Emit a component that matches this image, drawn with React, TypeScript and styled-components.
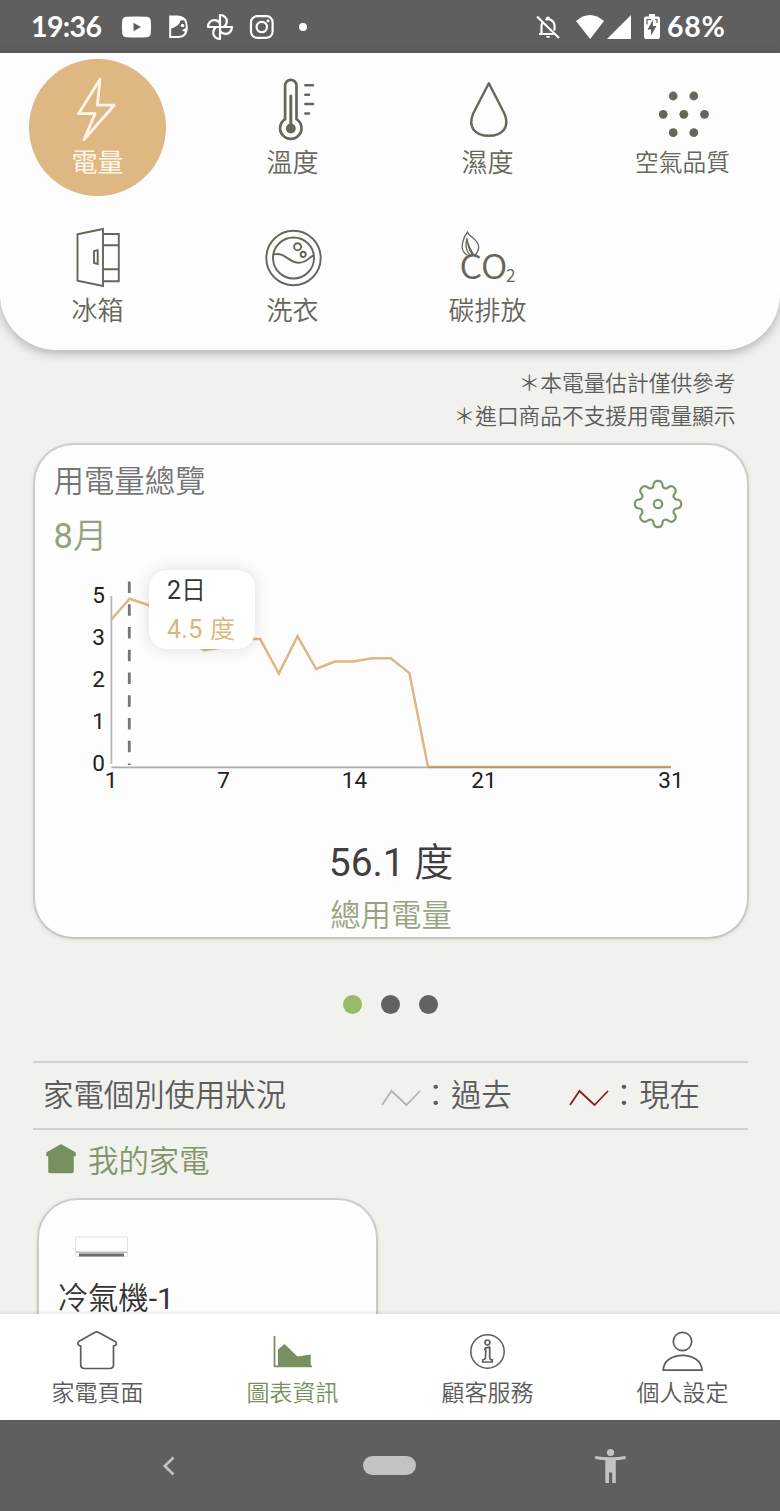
import React from "react";
import styled, { createGlobalStyle } from "styled-components";

const GlobalStyle = createGlobalStyle`
  * { box-sizing: border-box; }
  body { margin: 0; background: #f1f2ee; }
  svg { display: block; flex: none; overflow: visible; }
`;

const olive = "#66675a";
const green = "#788f60";
const slate = "#5c5c5c";
const amber = "#dfb783";

const Screen = styled.div`
  width: 780px;
  height: 1511px;
  display: flex;
  flex-direction: column;
  overflow: hidden;
  background: #f1f2ee;
  font-family: Roboto, "Noto Sans CJK TC", sans-serif;
  font-weight: 350;
`;

const Digits = styled.span`
  font-weight: 400;
`;

/* ---------- status bar ---------- */

const StatusBar = styled.header`
  flex: none;
  height: 53px;
  padding: 0 54px 0 31px;
  display: flex;
  justify-content: space-between;
  align-items: center;
  background: #5f5f5f;
  color: #fff;
`;

const StatusGroup = styled.div<{ $gap?: number }>`
  display: flex;
  align-items: center;
  gap: ${(p) => p.$gap ?? 0}px;
  height: 53px;
`;

const StatusText = styled.span<{ $width: number; $spacing: number }>`
  width: ${(p) => p.$width}px;
  letter-spacing: ${(p) => p.$spacing}px;
  font: 700 28.5px/53px Lato, sans-serif;
  white-space: nowrap;
`;

const Spacer = styled.span<{ $width: number }>`
  width: ${(p) => p.$width}px;
`;

const MoreDot = styled.span`
  width: 8px;
  height: 8px;
  margin-left: 6px;
  border-radius: 50%;
  background: #fff;
`;

/* ---------- category panel ---------- */

const CategoryPanel = styled.nav`
  flex: none;
  height: 296.5px;
  padding-top: 6px;
  display: grid;
  grid-template-columns: repeat(4, 195px);
  grid-auto-rows: 136px;
  row-gap: 12px;
  justify-items: center;
  background: #fdfdfd;
  border-radius: 0 0 56px 56px;
  box-shadow: 0 3px 11px rgba(0, 0, 0, 0.28);
`;

const Category = styled.button<{ $active?: boolean }>`
  width: 136.5px;
  height: 136.5px;
  padding: 18px 0 0;
  border: 0;
  border-radius: 50%;
  display: flex;
  flex-direction: column;
  align-items: center;
  background: ${(p) => (p.$active ? amber : "transparent")};
  color: ${(p) => (p.$active ? "#fff6ea" : olive)};
`;

const CategoryLabel = styled.span<{ $size?: number; $active?: boolean }>`
  margin-top: 6px;
  font: ${(p) => (p.$active ? 400 : 350)} ${(p) => p.$size ?? 26}px/32px Roboto, "Noto Sans CJK TC", sans-serif;
  white-space: nowrap;
`;

/* ---------- content ---------- */

const Content = styled.main`
  flex: 1;
  min-height: 0;
  overflow: hidden;
  display: flex;
  flex-direction: column;
`;

const Notes = styled.div`
  margin: 18.8px 44.5px 11.7px 0;
  text-align: right;
  font-size: 21.7px;
  line-height: 32.5px;
  color: #5c5c5c;
`;

const cardEdge = "0 0 0 2px rgba(0,0,0,.1), 0 1px 5px 1px rgba(0,0,0,.13)";

const OverviewCard = styled.section`
  flex: none;
  width: 712px;
  height: 492px;
  margin: 0 0 0.5px 35px;
  padding-top: 17px;
  border-radius: 38px;
  background: #fdfdfd;
  box-shadow: ${cardEdge};
`;

const CardHeader = styled.div`
  display: flex;
  justify-content: space-between;
  padding: 0 63.5px 0 18.5px;
  height: 97px;
`;

const CardTitle = styled.h2`
  margin: 0;
  font-size: 30.4px;
  line-height: 40px;
  font-weight: 350;
  color: #757575;
`;

const Month = styled.div`
  margin-top: 11px;
  font-size: 34.5px;
  line-height: 46px;
  color: #93a37d;
`;

const SettingsButton = styled.button`
  width: 52px;
  height: 52px;
  margin-top: 16px;
  padding: 0;
  border: 0;
  background: none;
  color: #81966c;
`;

const ChartArea = styled.div`
  position: relative;
  height: 280px;
`;

const Tooltip = styled.div`
  position: absolute;
  left: 113.5px;
  top: 11px;
  width: 106.5px;
  height: 79px;
  padding: 1px 0 0 18.5px;
  border-radius: 18px;
  background: #fff;
  box-shadow: 0 0 16px rgba(0, 0, 0, 0.13);
  font-size: 25px;
  line-height: 39px;
  color: #333336;
`;

const TooltipValue = styled.div`
  color: #dcb47c;
  word-spacing: 1px;
  letter-spacing: 0.3px;
`;

const Total = styled.div`
  text-align: center;
  font-size: 39px;
  line-height: 48px;
  color: #3f3f43;
`;

const TotalCaption = styled.div`
  margin-top: 9px;
  text-align: center;
  font-size: 30.4px;
  line-height: 40px;
  color: #97a482;
`;

const Pager = styled.div`
  flex: none;
  display: flex;
  justify-content: center;
  gap: 18.4px;
  margin: 57.2px 0 47px;
  padding-left: 1px;
`;

const PagerDot = styled.span<{ $active?: boolean }>`
  width: 19.6px;
  height: 19.6px;
  border-radius: 50%;
  background: ${(p) => (p.$active ? "#98bb6a" : "#626262")};
`;

const UsageBar = styled.div`
  flex: none;
  height: 69px;
  margin: 0 32px 0 33px;
  padding-left: 10px;
  display: flex;
  align-items: center;
  border: solid #d2d3d0;
  border-width: 2px 0;
  font-size: 30.4px;
  line-height: 40px;
  color: #5c5c5c;
`;

const UsageTitle = styled.span`
  flex: none;
  width: 338px;
`;

const Legend = styled.span`
  flex: none;
  width: 188.3px;
  display: flex;
  align-items: center;
  white-space: nowrap;
`;

const SectionTitle = styled.div`
  flex: none;
  display: flex;
  align-items: center;
  gap: 12px;
  height: 40px;
  margin: 12px 0 18px 46px;
  font-size: 30.4px;
  line-height: 40px;
  color: #82966d;
`;

const HouseMark = styled.svg`
  margin-bottom: 6px;
`;

const ApplianceCard = styled.section`
  flex: none;
  width: 337.5px;
  height: 200px;
  margin-left: 38.5px;
  padding: 36px 0 0 19px;
  border-radius: 38px;
  background: #fdfdfd;
  box-shadow: ${cardEdge};
  color: #333;
  font-size: 30.4px;
`;

const AirConditioner = styled.svg`
  margin-left: 17.5px;
`;

const ApplianceName = styled.div`
  margin-top: 19px;
  line-height: 40px;
`;

/* ---------- bottom bars ---------- */

const TabBar = styled.nav`
  flex: none;
  height: 106px;
  position: relative;
  display: grid;
  grid-template-columns: repeat(4, 195px);
  background: #fff;
  box-shadow: 0 -1px 4px rgba(0, 0, 0, 0.1);
`;

const Tab = styled.button<{ $active?: boolean }>`
  padding: 14px 0 0;
  border: 0;
  background: none;
  display: flex;
  flex-direction: column;
  align-items: center;
  gap: 6px;
  font: 350 23px/32px Roboto, "Noto Sans CJK TC", sans-serif;
  color: ${(p) => (p.$active ? green : slate)};
`;

const SystemBar = styled.footer`
  flex: none;
  height: 91px;
  padding: 0 154px 0 153px;
  display: flex;
  align-items: center;
  justify-content: space-between;
  background: #5f5f5f;
  color: #c3c3c3;
`;

const HomePill = styled.span`
  width: 53px;
  height: 19px;
  border-radius: 10px;
  background: #c3c3c3;
`;

/* ---------- icons ---------- */

const TileIcon = ({ children, stroke = 2.3 }: { children: React.ReactNode; stroke?: number }) => (
  <svg width="80" height="64" viewBox="-40 -32 80 64" fill="none" stroke="currentColor"
    strokeWidth={stroke} strokeLinejoin="round" strokeLinecap="round">{children}</svg>
);

const BoltIcon = () => (
  <TileIcon stroke={2.8}>
    <path d="M2-29.800-19.500 4.700H-2.900L-14 30.500 16.200-3.800H-.6Z" />
  </TileIcon>
);

const ThermometerIcon = () => (
  <TileIcon stroke={2.7}>
    <path d="M-7.900 10.200V-23.500a5.700 5.700 0 0 1 11.400 0V10.200A10.700 10.700 0 1 1-7.900 10.200Z" />
    <path d="M-2.200-13V18" strokeWidth="3" />
    <circle cx="-2.200" cy="19.500" r="4.900" fill="currentColor" stroke="none" />
    <path d="M12.300-23.700H20M12.300-14.300H16M12.300-5H20M12.300 4.600H16" strokeWidth="2.500" />
  </TileIcon>
);

const DropIcon = () => (
  <TileIcon stroke={2.4}>
    <path d="M.8-25.700-14.800 4.500C-20.500 18-13 26.800.8 26.800S22.100 18 16.400 4.500Z" />
  </TileIcon>
);

const AirIcon = () => (
  <TileIcon>
    <g fill="currentColor" stroke="none">
      {[[-9.8, -13], [10.8, -13], [-19.8, 5.3], [0.8, 5.3], [21.5, 5.3], [-9.8, 23.7], [10.8, 23.7]].map(
        ([x, y]) => <circle key={`${x},${y}`} cx={x} cy={y} r="4.4" />
      )}
    </g>
  </TileIcon>
);

const FridgeIcon = () => (
  <TileIcon stroke={1.9}>
    <path d="M-20.500-22.800 5-28V29L-20.500 23.700Z" strokeLinejoin="miter" />
    <path d="M5-23H20.800V24.300H5M5-11.800H20.800M5 12.300H20.800M-4-5.800-.300-6.800V7L-4 6Z" strokeLinejoin="miter" />
  </TileIcon>
);

const WasherIcon = () => (
  <TileIcon stroke={1.9}>
    <circle cx=".5" cy="1" r="27.200" />
    <circle cx=".5" cy="1" r="20.500" />
    <path d="M-19.500-2.600C-7-5-5 5.800 6 5.800 13.500 5.800 15.500.500 20.500-1.500" />
    <circle cx="4.600" cy="-10.300" r="3.500" />
    <circle cx="10.200" cy="-2.600" r="2.600" />
  </TileIcon>
);

const CarbonIcon = () => (
  <TileIcon stroke={1.3}>
    <path d="M-20.500-25C-25-19-27.500-10-24.500-5.500-23.500-3.500-22-2.500-21-2M-20.500-25C-19-20-9.500-18-9.300-10-9.300-7-10.500-4.500-12.500-2.500M-21-18.500C-23-12-21.500-6-18.500-2.500M-21-18.500C-20.500-12-17-7-14.500-2.500M-21-18.500C-20.500-13-19-7-16-3" />
    <g fill="currentColor" stroke="none" fontFamily="'Noto Sans CJK TC', sans-serif" fontWeight="350">
      <text x="-28.500" y="21.500" fontSize="34" textLength="48" lengthAdjust="spacingAndGlyphs">CO</text>
      <text x="17.800" y="24.600" fontSize="18">2</text>
    </g>
  </TileIcon>
);

const gearPath = (() => {
  const r = 19.7;
  const half = 13.1;
  const at = (deg: number) => {
    const a = (deg * Math.PI) / 180;
    return `${(r * Math.cos(a)).toFixed(2)} ${(r * Math.sin(a)).toFixed(2)}`;
  };
  let d = `M${at(-half)}`;
  for (let i = 0; i < 8; i++) {
    d += `A4.500 4.500 0 0 1 ${at(i * 45 + half)}A3.400 3.400 0 0 0 ${at((i + 1) * 45 - half)}`;
  }
  return d + "Z";
})();

const GearIcon = () => (
  <svg width="52" height="52" viewBox="-26 -26 52 52" fill="none" stroke="currentColor" strokeWidth="2.200">
    <path d={gearPath} />
    <circle r="4.200" />
  </svg>
);

const TrendMark = ({ color }: { color: string }) => (
  <svg width="39.500" height="18" viewBox="0 0 39.500 18" fill="none" stroke={color} strokeWidth="1.800">
    <path d="M1 18 10.500 4 25.500 18 39 4" />
  </svg>
);

const TabIcon = ({ children }: { children: React.ReactNode }) => (
  <svg width="44" height="44" viewBox="-21.5 -22 44 44" fill="none" stroke="currentColor" strokeWidth="1.700"
    strokeLinejoin="round">{children}</svg>
);

/* ---------- chart ---------- */

const daily = [3.93, 4.5, 4.33, 3.9, 3.4, 3.12, 3.2, 3.42, 3.42, 2.5, 3.5, 2.62, 2.82, 2.82, 2.91, 2.91, 2.51,
  ...Array(14).fill(0)];
const dayX = (day: number) => 76 + (day - 1) * 18.65;
const valueY = (v: number) => 208 - v * 37.4;

const UsageChart = () => (
  <svg width="712" height="241" viewBox="0 0 712 241" fill="none" fontFamily="Roboto, sans-serif" fontSize="22.500"
    fontWeight="400">
    <path d="M76.400 37V205" stroke="#b5b5b5" strokeWidth="1.700" />
    <path d="M76.400 208.300H636" stroke="#adadad" strokeWidth="1.800" />
    <path d="M94.300 22.500V206" stroke="#757575" strokeWidth="2.800" strokeDasharray="11.500 11.250" />
    <polyline points={daily.map((v, i) => `${dayX(i + 1)},${valueY(v)}`).join(" ")} stroke="#ddb784" strokeWidth="2.500" />
    <path d={`M${dayX(18)} 208.300H636`} stroke="#bb955e" strokeWidth="1.500" />
    <g fill="#202020" textAnchor="end">
      {[5, 3, 2, 1, 0].map((v, i) => <text key={v} x="70" y={44 + i * 42.1}>{v}</text>)}
    </g>
    <g fill="#202020" textAnchor="middle">
      {[[1, 76], [7, 188.5], [14, 319.5], [21, 449], [31, 636]].map(([d, x]) => (
        <text key={d} x={x} y="229">{d}</text>
      ))}
    </g>
  </svg>
);

const categories = [
  { label: "電量", icon: <BoltIcon />, active: true },
  { label: "溫度", icon: <ThermometerIcon /> },
  { label: "濕度", icon: <DropIcon /> },
  { label: "空氣品質", icon: <AirIcon />, size: 23.7 },
  { label: "冰箱", icon: <FridgeIcon /> },
  { label: "洗衣", icon: <WasherIcon /> },
  { label: "碳排放", icon: <CarbonIcon /> },
];

const tabs = [
  {
    label: "家電頁面",
    icon: <path d="M-2.800-17.500Q-.800-18.800 1.200-17.500L18-8.200Q20.200-5.500 17.200-4.300L16-4.200V14.500Q16 18.500 12 18.500H-12.800Q-16.800 18.500-16.800 14.500V-4.200L-18-4.400Q-21-5.700-18.800-8.500Z" />,
  },
  {
    label: "圖表資訊",
    active: true,
    icon: (
      <>
        <path d="M-18-14V16.300H19.500" strokeWidth="1.800" />
        <path d="M-14.500-.500-8-6 5 6.500 18.200 4.500V16H-14.500Z" fill="currentColor" stroke="none" />
      </>
    ),
  },
  {
    label: "顧客服務",
    icon: (
      <>
        <circle cx="0" cy="1.500" r="16.700" strokeWidth="1.500" />
        <circle cx="0" cy="-7.500" r="2.500" />
        <path d="M-2-2.200Q0-2.200 2.200-3V8Q2.200 9.700 5 9.800L4.700 12H-5L-4.700 9.800Q-2.300 9.600-2.100 8L-1.600 0-2.600-.300Z" />
      </>
    ),
  },
  {
    label: "個人設定",
    icon: (
      <>
        <circle cx="0" cy="-8.500" r="9.200" />
        <path d="M-19.300 20.200C-18.800.3 18.800.3 19.500 20.200Z" />
      </>
    ),
  },
];

export default function App() {
  return (
    <Screen>
      <GlobalStyle />
      <StatusBar>
        <StatusGroup $gap={18}>
          <StatusText $width={73} $spacing={-0.6}>19:36</StatusText>
          <svg width="29" height="22" viewBox="0 0 29 22">
            <path fill="#fff" fillRule="evenodd" d="M4 .8Q14.500 0 25 .8 28.500 1.200 28.800 5 29.300 11 28.800 17 28.500 20.800 25 21.200 14.500 22 4 21.200.500 20.800.200 17-.300 11 .200 5 .500 1.200 4 .8ZM11.500 6.700V15.300L19 11Z" />
          </svg>
          <svg width="20" height="24" viewBox="0 0 20 24">
            <path d="M1.200 1.500H9Q17.800 2 17.800 12T9 22H1.200Z" fill="none" stroke="#fff" strokeWidth="2" />
            <path d="M1 1H9Q14 1.500 16.500 5L11.500 5.500Q10.500 11 2.500 13.500H1Z" fill="#fff" />
            <circle cx="13.500" cy="10.500" r="1.800" fill="#fff" />
            <path d="M18 12.500 13 15Q14.500 17.500 17.500 16.500Z" fill="#fff" />
          </svg>
          <svg width="26" height="26" viewBox="-13 -13 26 26" fill="none" stroke="#fff" strokeWidth="2.200" strokeLinejoin="round">
            {[0, 90, 180, 270].map((a) => (
              <path key={a} transform={`rotate(${a})`} d="M0 0V-12C4.500-12 6.800-8.800 6.800-5.800 6.800-3 5.500-1.200 3.800 0" />
            ))}
          </svg>
          <svg width="24" height="24" viewBox="1.5 0 24 24" fill="none" stroke="#fff" strokeWidth="2.200">
            <rect x="1.500" y="1.200" width="21.600" height="21.600" rx="6" />
            <circle cx="12.300" cy="12" r="5.200" />
            <circle cx="18.500" cy="5.800" r="1.500" fill="#fff" stroke="none" />
          </svg>
          <MoreDot />
        </StatusGroup>
        <StatusGroup>
          <svg width="24" height="24" viewBox="0 0 24 24" fill="none" stroke="#fff" strokeWidth="2.200">
            <path d="M3 19H18M5.500 19V11Q5.500 8.500 7 6.700M9.500 4.800Q12 3.500 15 5 18.500 7 18.500 11V15.500M1 1.500 23 23" />
            <path d="M10 3.500a2 2 0 0 1 4 0zM10 21h4a2 2 0 0 1-4 0z" fill="#fff" stroke="none" />
          </svg>
          <Spacer $width={16} />
          <svg width="28" height="24" viewBox="0 0 28 24"><path fill="#fff" d="M0 6Q14-6 28 6L14.200 24Z" /></svg>
          <Spacer $width={3} />
          <svg width="24" height="24" viewBox="0 0 24 24"><path fill="#fff" d="M24 0V24H0Z" /></svg>
          <Spacer $width={13} />
          <svg width="16" height="25" viewBox="0 0 16 25">
            <path fill="#fff" d="M5 0h6v2.500h3q2 0 2 2V23q0 2-2 2H2q-2 0-2-2V4.500q0-2 2-2h3z" />
            <path fill="#5f5f5f" d="M9 6 3.500 15.500H7V21.500L12.500 12H9Z" />
            <path stroke="#5f5f5f" strokeWidth="1.200" fill="none" d="M3 10.500V5.500H7M13 9V5.500H11" />
          </svg>
          <Spacer $width={7} />
          <StatusText $width={59} $spacing={0.7}>68%</StatusText>
        </StatusGroup>
      </StatusBar>

      <CategoryPanel>
        {categories.map((c) => (
          <Category key={c.label} $active={c.active}>
            {c.icon}
            <CategoryLabel $size={c.size} $active={c.active}>{c.label}</CategoryLabel>
          </Category>
        ))}
      </CategoryPanel>

      <Content>
        <Notes>
          <div>＊本電量估計僅供參考</div>
          <div>＊進口商品不支援用電量顯示</div>
        </Notes>

        <OverviewCard>
          <CardHeader>
            <div>
              <CardTitle>用電量總覽</CardTitle>
              <Month><Digits>8</Digits>月</Month>
            </div>
            <SettingsButton><GearIcon /></SettingsButton>
          </CardHeader>
          <ChartArea>
            <UsageChart />
            <Tooltip>
              <div><Digits>2</Digits>日</div>
              <TooltipValue><Digits>4.5</Digits> 度</TooltipValue>
            </Tooltip>
          </ChartArea>
          <Total><Digits>56.1</Digits> 度</Total>
          <TotalCaption>總用電量</TotalCaption>
        </OverviewCard>

        <Pager>
          <PagerDot $active />
          <PagerDot />
          <PagerDot />
        </Pager>

        <UsageBar>
          <UsageTitle>家電個別使用狀況</UsageTitle>
          <Legend><TrendMark color="#b3b3b3" />：過去</Legend>
          <Legend><TrendMark color="#861f24" />：現在</Legend>
        </UsageBar>

        <SectionTitle>
          <HouseMark width="30" height="30" viewBox="0 0 30 30">
            <path fill={green} stroke={green} strokeLinejoin="round" strokeWidth="1.500" d="M15 1 29 9V11.500H27V27.500Q27 28.500 26 28.500H4Q3 28.500 3 27.500V11.500H1V9Z" />
          </HouseMark>
          我的家電
        </SectionTitle>

        <ApplianceCard>
          <AirConditioner width="53" height="24" viewBox="0 0 53 24">
            <rect x=".5" y="1" width="52" height="19.500" rx="1" fill="#fff" stroke="#e2e2e2" />
            <path d="M1 16.300H52" stroke="#bbb" strokeWidth="1.500" />
            <path d="M4 19H49" stroke="#6b6b6b" strokeWidth="2.800" />
          </AirConditioner>
          <ApplianceName>冷氣機<Digits>-1</Digits></ApplianceName>
        </ApplianceCard>
      </Content>

      <TabBar>
        {tabs.map((t) => (
          <Tab key={t.label} $active={t.active}>
            <TabIcon>{t.icon}</TabIcon>
            {t.label}
          </Tab>
        ))}
      </TabBar>

      <SystemBar>
        <svg width="32" height="32" viewBox="0 0 32 32" fill="none" stroke="currentColor" strokeWidth="2.600">
          <path d="M20.500 7.500 11.800 16 20.500 24.500" />
        </svg>
        <HomePill />
        <svg width="32" height="36" viewBox="-16 -18 32 36" fill="currentColor">
          <circle cx=".5" cy="-13.500" r="3.600" />
          <path d="M-14.800-10Q.500-7.500 15.500-10L15.800-7Q11-6 5.800-5.700V17H2.200V6.500H-1V17H-4.700V-5.700Q-10-6-14.800-7Z" />
        </svg>
      </SystemBar>
    </Screen>
  );
}
